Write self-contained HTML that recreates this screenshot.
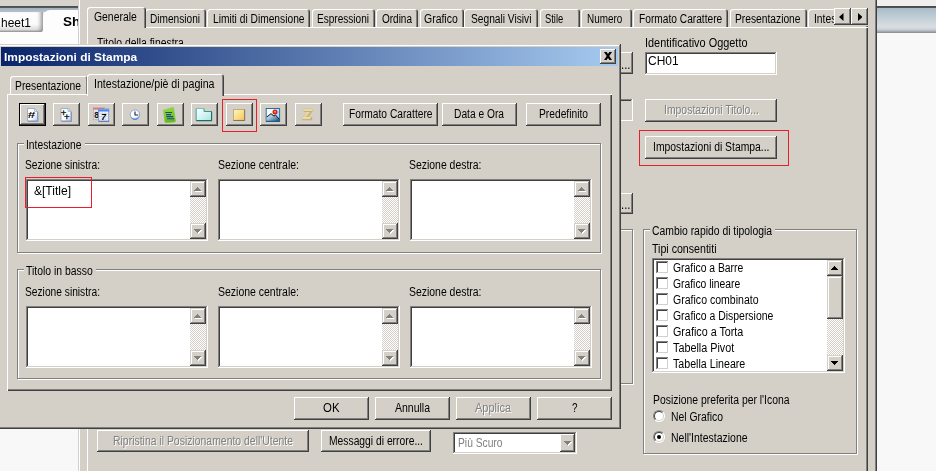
<!DOCTYPE html>
<html lang="it">
<head>
<meta charset="utf-8">
<title>Impostazioni di Stampa</title>
<style>
html,body{margin:0;padding:0;}
body{width:936px;height:471px;overflow:hidden;position:relative;background:#d4d0c8;font-family:"Liberation Sans",sans-serif;font-size:12px;color:#000;}
.a{position:absolute;box-sizing:border-box;}
.t{position:absolute;white-space:nowrap;line-height:14px;height:14px;transform-origin:0 50%;}
.btn{position:absolute;box-sizing:border-box;background:#d4d0c8;box-shadow:inset -1px -1px 0 #404040,inset 1px 1px 0 #fff,inset -2px -2px 0 #808080,inset 2px 2px 0 #d4d0c8;}
.dis{color:#808080;text-shadow:1px 1px 0 #fff;}
.sunk{position:absolute;box-sizing:border-box;background:#fff;box-shadow:inset -1px -1px 0 #fff,inset 1px 1px 0 #808080,inset -2px -2px 0 #d4d0c8,inset 2px 2px 0 #404040;}
.grp{position:absolute;box-sizing:border-box;border:1px solid #808080;box-shadow:1px 1px 0 #fff,inset 1px 1px 0 #fff;}
.sb{position:absolute;width:16px;background-color:#e9e7e3;background-image:conic-gradient(#fff 25%,#d4d0c8 0 50%,#fff 0 75%,#d4d0c8 0);background-size:2px 2px;}
.sbb{position:absolute;left:0;width:16px;height:16px;box-sizing:border-box;background:#d4d0c8;box-shadow:inset -1px -1px 0 #404040,inset 1px 1px 0 #d4d0c8,inset -2px -2px 0 #808080,inset 2px 2px 0 #fff;}
.sbb svg{position:absolute;left:4px;top:6px;}
.sb.d .sbb svg{filter:drop-shadow(1px 1px 0 #fff);}
.cb{position:absolute;width:13px;height:13px;box-sizing:border-box;background:#fff;box-shadow:inset -1px -1px 0 #fff,inset 1px 1px 0 #808080,inset -2px -2px 0 #d4d0c8,inset 2px 2px 0 #404040;}
.rb{position:absolute;width:12px;height:12px;box-sizing:border-box;border-radius:50%;background:#fff;border:1px solid;border-color:#808080 #fff #fff #808080;}
.rb::before{content:"";position:absolute;left:0;top:0;width:10px;height:10px;box-sizing:border-box;border-radius:50%;border:1px solid;border-color:#404040 #d4d0c8 #d4d0c8 #404040;}
.rb i{position:absolute;left:3px;top:3px;width:4px;height:4px;border-radius:50%;background:#000;}
.tab{position:absolute;box-sizing:border-box;background:#d4d0c8;border-radius:3px 3px 0 0;box-shadow:inset 1px 1px 0 #fff,inset -1px 0 0 #404040,inset -2px 0 0 #808080;}
.tab.sel{box-shadow:inset 1px 1px 0 #fff,inset -1px 0 0 #404040,inset -2px 0 0 #808080;}
</style>
</head>
<body>

<!-- ===== background application ===== -->
<div class="a" style="left:0;top:0;width:78px;height:471px;background:#f8f8f8;"></div>
<div class="a" style="left:0;top:0;width:78px;height:6px;background:#d6d3cc;"></div>
<div class="a" style="left:0;top:6px;width:78px;height:6px;background:linear-gradient(#4a4c4e 0,#56585a 1.6px,#9fb1c0 2.1px,#b6c2cc 6px);"></div>
<div class="a" style="left:0;top:12px;width:78px;height:22px;background:#e9e9e9;"></div>
<div class="a" style="left:0;top:12px;width:43px;height:20px;border-radius:0 0 3px 0;background:linear-gradient(#fdfdfd 0,#fbfbfb 60%,#dcdcdc 88%,#909090 100%);box-shadow:inset -5px 0 4px -3px #8c8c8c;"></div>
<div class="t" style="left:1px;top:15.500px;font-size:13px;transform:scaleX(0.92);">heet1</div>
<div class="a" style="left:43px;top:10px;width:35px;height:36px;border-radius:7px 0 0 0;background:#fdfdfd;"></div>
<div class="a" style="left:0;top:32px;width:78px;height:14px;background:#fdfdfd;"></div>
<div class="t" style="left:63px;top:14.500px;font-size:12.500px;font-weight:bold;transform:scaleX(1.08);">Sh</div>

<!-- right side app area -->
<div class="a" style="left:877px;top:0;width:59px;height:471px;background:#f8f8f8;"></div>
<div class="a" style="left:877px;top:0;width:59px;height:6px;background:#f0efed;"></div>
<div class="a" style="left:877px;top:6px;width:59px;height:27px;background:linear-gradient(#47494b 0,#505356 1.7px,#a8bcc8 2.2px,#c4cfd6 12px,#d9dee3 21px,#c9cfd5 23.5px,#98a0a8 26px,#8c9298 26.6px,#f8f8f8 27px);"></div>

<!-- ===== properties dialog (behind) ===== -->
<div class="a" style="left:78px;top:0;width:799px;height:471px;background:#d4d0c8;box-shadow:inset 1px 0 0 #d4d0c8,inset 2px 0 0 #fff,inset -1px 0 0 #404040,inset -2px 0 0 #808080;"></div>
<!-- tab pane of properties dialog -->
<div class="a" style="left:87px;top:27px;width:781px;height:460px;box-shadow:inset 1px 1px 0 #fff,inset -1px 0 0 #404040,inset -2px 0 0 #808080;"></div>
<div class="tab" style="left:145px;top:9px;width:61px;height:18px;"></div>
<div class="t" style="left:150px;top:11.5px;font-size:12px;transform:scaleX(0.8423);">Dimensioni</div>
<div class="tab" style="left:207px;top:9px;width:103px;height:18px;"></div>
<div class="t" style="left:212.5px;top:11.5px;font-size:12px;transform:scaleX(0.8522);">Limiti di Dimensione</div>
<div class="tab" style="left:312px;top:9px;width:63px;height:18px;"></div>
<div class="t" style="left:317px;top:11.5px;font-size:12px;transform:scaleX(0.8383);">Espressioni</div>
<div class="tab" style="left:376px;top:9px;width:42px;height:18px;"></div>
<div class="t" style="left:381.5px;top:11.5px;font-size:12px;transform:scaleX(0.8326);">Ordina</div>
<div class="tab" style="left:420px;top:9px;width:44px;height:18px;"></div>
<div class="t" style="left:424px;top:11.5px;font-size:12px;transform:scaleX(0.8724);">Grafico</div>
<div class="tab" style="left:464px;top:9px;width:74px;height:18px;"></div>
<div class="t" style="left:470.95px;top:11.5px;font-size:12px;transform:scaleX(0.8502);">Segnali Visivi</div>
<div class="tab" style="left:540px;top:9px;width:40px;height:18px;"></div>
<div class="t" style="left:544.7px;top:11.5px;font-size:12px;transform:scaleX(0.7818);">Stile</div>
<div class="tab" style="left:581px;top:9px;width:51px;height:18px;"></div>
<div class="t" style="left:587.25px;top:11.5px;font-size:12px;transform:scaleX(0.8258);">Numero</div>
<div class="tab" style="left:633px;top:9px;width:95px;height:18px;"></div>
<div class="t" style="left:638.75px;top:11.5px;font-size:12px;transform:scaleX(0.8491);">Formato Carattere</div>
<div class="tab" style="left:730px;top:9px;width:77px;height:18px;"></div>
<div class="t" style="left:735.25px;top:11.5px;font-size:12px;transform:scaleX(0.8538);">Presentazione</div>
<div class="tab" style="left:808px;top:9px;width:60px;height:18px;"></div>
<div class="a" style="left:812px;top:10px;width:22px;height:16px;overflow:hidden;"><div class="t" style="left:1.75px;top:1.5px;font-size:12px;transform:scaleX(0.8576);">Intestazione</div></div>
<div class="tab sel" style="left:87px;top:7px;width:59px;height:21px;"></div>
<div class="t" style="left:94.25px;top:9.5px;font-size:12px;transform:scaleX(0.8658);">Generale</div>
<div class="a" style="left:834px;top:6px;width:34px;height:20px;background:#d4d0c8;"></div>
<div class="btn" style="left:834px;top:8px;width:17px;height:17px;"><svg class="a" style="left:5px;top:4.500px" width="4.500" height="8" viewBox="0 0 4.500 8"><path d="M4.500 0v8L0 4z" fill="#000"/></svg></div>
<div class="btn" style="left:851px;top:8px;width:17px;height:17px;"><svg class="a" style="left:6.500px;top:4.500px" width="4.500" height="8" viewBox="0 0 4.500 8"><path d="M0 0v8L4.500 4z" fill="#000"/></svg></div>
<div class="t" style="left:97px;top:35.6px;font-size:12px;transform:scaleX(0.8651);">Titolo della finestra</div>
<div class="t" style="left:644.5px;top:36px;font-size:12px;transform:scaleX(0.9092);">Identificativo Oggetto</div>
<div class="sunk" style="left:645px;top:52px;width:132px;height:23px;"></div>
<div class="t" style="left:648.4px;top:54.4px;font-size:12.3px;transform:scaleX(0.9729);">CH01</div>
<div class="btn" style="left:612px;top:52px;width:21px;height:22px;"></div>
<div class="t" style="left:621px;top:57.5px;font-size:12px;transform:scaleX(0.9485);">...</div>
<div class="sunk" style="left:560px;top:99px;width:73px;height:22px;background:#d4d0c8;"></div>
<div class="btn" style="left:612px;top:193px;width:21px;height:21px;"></div>
<div class="t" style="left:621px;top:197.5px;font-size:12px;transform:scaleX(0.9485);">...</div>
<div class="grp" style="left:500px;top:229px;width:133px;height:155px;"></div>
<div class="btn" style="left:645px;top:99px;width:132px;height:23px;"></div><div class="t dis" style="left:663.5px;top:103px;font-size:12px;transform:scaleX(0.8684);">Impostazioni Titolo...</div>
<div class="btn" style="left:645px;top:136px;width:132px;height:23px;"></div><div class="t" style="left:652.75px;top:140px;font-size:12px;transform:scaleX(0.8647);">Impostazioni di Stampa...</div>
<div class="a" style="left:639px;top:130px;width:150px;height:36px;border:1px solid #ec1c28;"></div>
<div class="grp" style="left:643px;top:229px;width:214px;height:225px;"></div><div class="a" style="left:649.5px;top:228px;width:125px;height:3px;background:#d4d0c8;"></div><div class="t" style="left:651.5px;top:223.5px;font-size:12px;transform:scaleX(0.8649);">Cambio rapido di tipologia</div>
<div class="t" style="left:652.3px;top:242px;font-size:12px;transform:scaleX(0.8845);">Tipi consentiti</div>
<div class="sunk" style="left:652px;top:258px;width:193px;height:115px;"></div>
<div class="cb" style="left:656px;top:261px;"></div>
<div class="t" style="left:672.7px;top:261px;font-size:12px;transform:scaleX(0.8639);">Grafico a Barre</div>
<div class="cb" style="left:656px;top:277px;"></div>
<div class="t" style="left:672.7px;top:277px;font-size:12px;transform:scaleX(0.8623);">Grafico lineare</div>
<div class="cb" style="left:656px;top:293px;"></div>
<div class="t" style="left:672.7px;top:293px;font-size:12px;transform:scaleX(0.8789);">Grafico combinato</div>
<div class="cb" style="left:656px;top:309px;"></div>
<div class="t" style="left:672.7px;top:309px;font-size:12px;transform:scaleX(0.8692);">Grafico a Dispersione</div>
<div class="cb" style="left:656px;top:325px;"></div>
<div class="t" style="left:672.7px;top:325px;font-size:12px;transform:scaleX(0.8957);">Grafico a Torta</div>
<div class="cb" style="left:656px;top:341px;"></div>
<div class="t" style="left:672.7px;top:341px;font-size:12px;transform:scaleX(0.9008);">Tabella Pivot</div>
<div class="cb" style="left:656px;top:357px;"></div>
<div class="t" style="left:672.7px;top:357px;font-size:12px;transform:scaleX(0.8881);">Tabella Lineare</div>
<div class="sb" style="left:827px;top:260px;height:111px;"><div class="sbb" style="top:0;"><svg width="7" height="4" viewBox="0 0 7 4"><path d="M3 0h1v1h1v1h1v1h1v1h-7v-1h1v-1h1v-1h1z" fill="#000"/></svg></div><div class="sbb" style="top:16px;height:43px;"></div><div class="sbb" style="top:95px;"><svg width="7" height="4" viewBox="0 0 7 4"><path d="M0 0h7v1h-1v1h-1v1h-1v1h-1v-1h-1v-1h-1v-1h-1z" fill="#000"/></svg></div></div>
<div class="t" style="left:652.5px;top:392.6px;font-size:12px;transform:scaleX(0.8655);">Posizione preferita per l'Icona</div>
<div class="rb" style="left:653px;top:410px;"></div>
<div class="t" style="left:670.5px;top:409.6px;font-size:12px;transform:scaleX(0.8662);">Nel Grafico</div>
<div class="rb" style="left:653px;top:431px;"><i></i></div>
<div class="t" style="left:670.5px;top:430.6px;font-size:12px;transform:scaleX(0.8736);">Nell'Intestazione</div>
<div class="btn" style="left:97px;top:430px;width:212px;height:22px;"></div><div class="t dis" style="left:113px;top:433.5px;font-size:12px;transform:scaleX(0.8693);">Ripristina il Posizionamento dell'Utente</div>
<div class="btn" style="left:320.5px;top:430px;width:110px;height:22px;"></div><div class="t" style="left:328.5px;top:433.5px;font-size:12px;transform:scaleX(0.8593);">Messaggi di errore...</div>
<div class="sunk" style="left:453px;top:432px;width:124px;height:22px;"></div>
<div class="t" style="left:457.5px;top:436.2px;font-size:12px;transform:scaleX(0.8553);color:#808080;">Più Scuro</div>
<div class="btn" style="left:560px;top:434px;width:15px;height:18px;"><svg class="a" style="left:4px;top:7px;filter:drop-shadow(1px 1px 0 #fff);" width="7" height="4" viewBox="0 0 7 4"><path d="M0 0h7v1h-1v1h-1v1h-1v1h-1v-1h-1v-1h-1v-1h-1z" fill="#808080"/></svg></div>

<!-- ===== front dialog: Impostazioni di Stampa ===== -->
<div class="a" style="left:-2px;top:44px;width:623px;height:385px;background:#d4d0c8;box-shadow:inset -1px -1px 0 #404040,inset 1px 1px 0 #d4d0c8,inset -2px -2px 0 #808080,inset 2px 2px 0 #fff;"></div>
<div class="a" style="left:1px;top:47px;width:617px;height:19px;background:linear-gradient(90deg,#0a246a,#a6caf0);"></div>
<div class="t" style="left:3.500px;top:50.400px;font-size:11.500px;font-weight:bold;color:#fff;transform:scaleX(1.037);">Impostazioni di Stampa</div>
<div class="btn" style="left:600px;top:49px;width:16px;height:15px;">
<svg class="a" style="left:4px;top:3px" width="8" height="8" viewBox="0 0 8 8"><path d="M0 0h2.600l1.400 1.900l1.400-1.900h2.600l-2.700 4l2.700 4h-2.600l-1.400-1.900l-1.400 1.900h-2.600l2.700-4z" fill="#000"/></svg>
</div>
<div class="tab" style="left:10px;top:76px;width:78px;height:19px;"></div>
<div class="t" style="left:15.4px;top:78.8px;font-size:12px;transform:scaleX(0.8603);">Presentazione</div>
<div class="a" style="left:7px;top:94px;width:605px;height:297px;box-shadow:inset 1px 1px 0 #fff,inset -1px -1px 0 #404040,inset -2px -2px 0 #808080;"></div>
<div class="tab sel" style="left:87px;top:74px;width:137px;height:22px;"></div>
<div class="t" style="left:94.4px;top:77px;font-size:12px;transform:scaleX(0.8853);">Intestazione/piè di pagina</div>
<div class="a" style="left:19px;top:103px;width:27px;height:23px;background:#000;"></div>
<div class="btn" style="left:20px;top:104px;width:25px;height:21px;"></div>
<div class="btn" style="left:53px;top:103px;width:27px;height:23px;"></div>
<div class="btn" style="left:88px;top:103px;width:27px;height:23px;"></div>
<div class="btn" style="left:122px;top:103px;width:27px;height:23px;"></div>
<div class="btn" style="left:157px;top:103px;width:27px;height:23px;"></div>
<div class="btn" style="left:191px;top:103px;width:27px;height:23px;"></div>
<div class="btn" style="left:226px;top:103px;width:27px;height:23px;"></div>
<div class="btn" style="left:260px;top:103px;width:27px;height:23px;"></div>
<div class="btn" style="left:295px;top:103px;width:27px;height:23px;"></div>
<!-- toolbar icons -->
<svg class="a" style="left:0;top:100px" width="330" height="30" viewBox="0 100 330 30">
<defs>
<linearGradient id="gp" x1="0" y1="0" x2="1" y2="1"><stop offset="0" stop-color="#ffffff"/><stop offset="0.6" stop-color="#fbfcfe"/><stop offset="1" stop-color="#b4c6e0"/></linearGradient>
<linearGradient id="gy" x1="0" y1="0" x2="1" y2="1"><stop offset="0" stop-color="#fdf3c4"/><stop offset="0.5" stop-color="#fbe08c"/><stop offset="1" stop-color="#f7c24e"/></linearGradient>
<linearGradient id="gg" x1="0" y1="0" x2="0.300" y2="1"><stop offset="0" stop-color="#9be04c"/><stop offset="1" stop-color="#62b81e"/></linearGradient>
<linearGradient id="gf" x1="0" y1="0" x2="1" y2="1"><stop offset="0" stop-color="#ffffff"/><stop offset="0.5" stop-color="#d6f4f4"/><stop offset="1" stop-color="#a4e4e4"/></linearGradient>
<linearGradient id="gs" x1="0" y1="0" x2="1" y2="0.300"><stop offset="0" stop-color="#ffffff"/><stop offset="0.450" stop-color="#f2f6fc"/><stop offset="1" stop-color="#a4d8fa"/></linearGradient>
<linearGradient id="gm" x1="0" y1="0" x2="1" y2="1"><stop offset="0" stop-color="#f4f8fc"/><stop offset="0.450" stop-color="#9cbad0"/><stop offset="1" stop-color="#1c4468"/></linearGradient>
<radialGradient id="gc" cx="0.4" cy="0.35" r="0.7"><stop offset="0" stop-color="#ffffff"/><stop offset="0.6" stop-color="#ffffff"/><stop offset="0.85" stop-color="#b4c8f0"/><stop offset="1" stop-color="#5c88dc"/></radialGradient>
<linearGradient id="gz" x1="0" y1="0" x2="1" y2="1"><stop offset="0" stop-color="#f6e8b8"/><stop offset="1" stop-color="#d8c080"/></linearGradient>
</defs>
<!-- 1: page with # -->
<path d="M27.500 108.500h7l3 3v9.500h-10z" fill="url(#gp)" stroke="#90a8cc" stroke-width="0.900"/>
<path d="M34.500 108.500v3h3z" fill="#e4ecf8" stroke="#90a8cc" stroke-width="0.700"/>
<path d="M28 121.300h10M37.900 112v9.500" stroke="#7890b4" stroke-width="0.900" fill="none"/>
<text transform="translate(27.600,117.500) scale(1.450,0.950)" font-family="Liberation Sans, sans-serif" font-size="9.500" font-weight="bold" font-style="italic" fill="#000">#</text>
<!-- 2: page with ++ -->
<path d="M61 108.500h7l3 3v9.500h-10z" fill="url(#gp)" stroke="#90a8cc" stroke-width="0.900"/>
<path d="M68 108.500v3h3z" fill="#e4ecf8" stroke="#90a8cc" stroke-width="0.700"/>
<path d="M61.500 121.300h10M71.400 112v9.500" stroke="#7890b4" stroke-width="0.900" fill="none"/>
<text x="60.700" y="116.300" font-family="Liberation Sans, sans-serif" font-size="9.500" fill="#000" stroke="#000" stroke-width="0.300">+</text>
<text x="63.900" y="120.300" font-family="Liberation Sans, sans-serif" font-size="9.500" fill="#000" stroke="#000" stroke-width="0.300">+</text>
<!-- 3: calendars -->
<rect x="93.400" y="107.400" width="10.400" height="12" fill="#dfe5f0" stroke="#a9b6cc" stroke-width="0.800"/>
<rect x="93" y="107" width="11.200" height="2.600" fill="#dc7c70"/>
<rect x="93" y="107" width="11.200" height="1" fill="#e8a69c"/>
<text x="94.300" y="118" font-family="Liberation Sans, sans-serif" font-size="8.500" font-weight="bold" fill="#111">8</text>
<rect x="98.700" y="109.200" width="10" height="12" fill="#f2f5fb" stroke="#6a8cc8" stroke-width="0.800"/>
<path d="M99 113.500h9.500M99 116.500h9.500M99 119h9.500M102 111.500v9.500M105.300 111.500v9.500" stroke="#c5d3ea" stroke-width="0.700"/>
<rect x="98.300" y="108.800" width="10.800" height="2.700" fill="#4c84ea"/>
<rect x="98.300" y="108.800" width="10.800" height="1" fill="#7aa6f2"/>
<path d="M98.700 121.300h10.400" stroke="#4a6aa4" stroke-width="0.800"/>
<text x="101.200" y="120" font-family="Liberation Sans, sans-serif" font-size="8.500" font-weight="bold" font-style="italic" fill="#000">7</text>
<!-- 4: clock -->
<circle cx="135" cy="114.600" r="4.700" fill="url(#gc)" stroke="#86a4e0" stroke-width="0.900"/>
<path d="M131.500 118a5 5 0 0 0 7 0" stroke="#4c7cd8" stroke-width="1" fill="none"/>
<path d="M135 111.600v3.400h3" stroke="#1c2434" stroke-width="1.100" fill="none"/>
<!-- 5: green doc -->
<path d="M163.400 110.200l9.300-2.800l0.800 0.300l2 13.200l-0.600 1l-9 0.800l-1-0.800z" fill="url(#gg)" stroke="#7ccc34" stroke-width="0.600"/>
<path d="M165.300 112.500h6.700M166 114.600h5M166.300 116.600h6.700M167 118.700h7" stroke="#1c4a84" stroke-width="1.050"/>
<!-- 6: folder -->
<path d="M196.200 108.500h7.800v3h7.500v9h-15.300z" fill="url(#gf)" stroke="#3a9892" stroke-width="1"/>
<path d="M196.200 120.600h15.400v-9" stroke="#1c6c68" stroke-width="1.100" fill="none"/>
<path d="M196.200 120.500v-12h7.800" stroke="#7cc6c2" stroke-width="0.900" fill="none"/>
<!-- 7: yellow square -->
<rect x="233.600" y="109.400" width="10.900" height="10.900" fill="url(#gy)" stroke="#b8a070" stroke-width="0.800"/>
<path d="M233.400 120.500h11.300v-11" stroke="#6c6a60" stroke-width="0.800" fill="none"/>
<!-- 8: picture -->
<rect x="266.200" y="108.500" width="13.400" height="13" fill="url(#gs)" stroke="#2c6ca4" stroke-width="1"/>
<path d="M266.700 117l4.300-3.300l3 2.400l1.500-1.100l3.700 4.200v2h-12.500z" fill="url(#gm)"/>
<path d="M266.700 117l4.300-3.300l3 2.400l1.500-1.100l3.900 4.400" stroke="#0c1420" stroke-width="1" fill="none"/>
<path d="M266 121.400h14" stroke="#1c5c94" stroke-width="1.200"/>
<circle cx="275" cy="112" r="2.500" fill="#dc1c1c"/>
<circle cx="275" cy="111.700" r="1" fill="#f89c3c"/>
<!-- 9: scroll (disabled) -->
<path d="M307.300 110.500h5.500l-5 7.600h-5.400z" fill="url(#gz)" stroke="#cdb880" stroke-width="0.400"/>
<path d="M310.600 110.700h2.200l-5 7.400h-2z" fill="#bfa96f" opacity="0.700"/>
<rect x="303.200" y="109" width="10" height="2.500" rx="1.250" fill="#efe0b0" stroke="#cbb67e" stroke-width="0.500"/>
<path d="M304 111.400h8.600" stroke="#b8a268" stroke-width="0.700"/>
<rect x="301.900" y="117.200" width="10.200" height="2.500" rx="1.250" fill="#e9d8a4" stroke="#c4ae76" stroke-width="0.500"/>
<path d="M302.600 117.500h8" stroke="#f8f0d0" stroke-width="0.600"/>
<circle cx="311.200" cy="118.400" r="0.900" fill="#bfa96f"/><path d="M302.500 119.700h9" stroke="#b8a268" stroke-width="0.600"/>
</svg>

<div class="a" style="left:222px;top:99px;width:35px;height:33px;border:1px solid #ec1c28;"></div>
<div class="btn" style="left:343px;top:103px;width:94.5px;height:23px;"></div><div class="t" style="left:348.5px;top:107px;font-size:12px;transform:scaleX(0.8516);">Formato Carattere</div>
<div class="btn" style="left:441.5px;top:103px;width:75.5px;height:23px;"></div><div class="t" style="left:454.25px;top:107px;font-size:12px;transform:scaleX(0.8517);">Data e Ora</div>
<div class="btn" style="left:526px;top:103px;width:75px;height:23px;"></div><div class="t" style="left:539px;top:107px;font-size:12px;transform:scaleX(0.8540);">Predefinito</div>
<div class="grp" style="left:17px;top:143px;width:584px;height:110px;"></div><div class="a" style="left:24.25px;top:142px;width:60.5px;height:3px;background:#d4d0c8;"></div><div class="t" style="left:26.25px;top:137.5px;font-size:12px;transform:scaleX(0.8576);">Intestazione</div>
<div class="t" style="left:25.45px;top:157.5px;font-size:12px;transform:scaleX(0.8518);">Sezione sinistra:</div>
<div class="t" style="left:217.7px;top:157.5px;font-size:12px;transform:scaleX(0.8735);">Sezione centrale:</div>
<div class="t" style="left:409.45px;top:157.5px;font-size:12px;transform:scaleX(0.8694);">Sezione destra:</div>
<div class="sunk" style="left:26px;top:179px;width:182px;height:62px;"></div><div class="sb d" style="left:190px;top:181px;height:58px;"><div class="sbb" style="top:0;"><svg width="7" height="4" viewBox="0 0 7 4"><path d="M3 0h1v1h1v1h1v1h1v1h-7v-1h1v-1h1v-1h1z" fill="#808080"/></svg></div><div class="sbb" style="top:42px;"><svg width="7" height="4" viewBox="0 0 7 4"><path d="M0 0h7v1h-1v1h-1v1h-1v1h-1v-1h-1v-1h-1v-1h-1z" fill="#808080"/></svg></div></div>
<div class="sunk" style="left:218px;top:179px;width:182px;height:62px;"></div><div class="sb d" style="left:382px;top:181px;height:58px;"><div class="sbb" style="top:0;"><svg width="7" height="4" viewBox="0 0 7 4"><path d="M3 0h1v1h1v1h1v1h1v1h-7v-1h1v-1h1v-1h1z" fill="#808080"/></svg></div><div class="sbb" style="top:42px;"><svg width="7" height="4" viewBox="0 0 7 4"><path d="M0 0h7v1h-1v1h-1v1h-1v1h-1v-1h-1v-1h-1v-1h-1z" fill="#808080"/></svg></div></div>
<div class="sunk" style="left:410px;top:179px;width:182px;height:62px;"></div><div class="sb d" style="left:574px;top:181px;height:58px;"><div class="sbb" style="top:0;"><svg width="7" height="4" viewBox="0 0 7 4"><path d="M3 0h1v1h1v1h1v1h1v1h-7v-1h1v-1h1v-1h1z" fill="#808080"/></svg></div><div class="sbb" style="top:42px;"><svg width="7" height="4" viewBox="0 0 7 4"><path d="M0 0h7v1h-1v1h-1v1h-1v1h-1v-1h-1v-1h-1v-1h-1z" fill="#808080"/></svg></div></div>
<div class="t" style="left:33.75px;top:183.5px;font-size:12px;transform:scaleX(1.0025);">&amp;[Title]</div>
<div class="a" style="left:25px;top:177px;width:67px;height:31px;border:1px solid #ec1c28;"></div>
<div class="grp" style="left:17px;top:269px;width:584px;height:110px;"></div><div class="a" style="left:24.25px;top:268px;width:71.75px;height:3px;background:#d4d0c8;"></div><div class="t" style="left:26.25px;top:263.5px;font-size:12px;transform:scaleX(0.8676);">Titolo in basso</div>
<div class="t" style="left:25.45px;top:284.75px;font-size:12px;transform:scaleX(0.8518);">Sezione sinistra:</div>
<div class="t" style="left:217.7px;top:284.75px;font-size:12px;transform:scaleX(0.8735);">Sezione centrale:</div>
<div class="t" style="left:409.45px;top:284.75px;font-size:12px;transform:scaleX(0.8694);">Sezione destra:</div>
<div class="sunk" style="left:26px;top:306px;width:182px;height:62px;"></div><div class="sb d" style="left:190px;top:308px;height:58px;"><div class="sbb" style="top:0;"><svg width="7" height="4" viewBox="0 0 7 4"><path d="M3 0h1v1h1v1h1v1h1v1h-7v-1h1v-1h1v-1h1z" fill="#808080"/></svg></div><div class="sbb" style="top:42px;"><svg width="7" height="4" viewBox="0 0 7 4"><path d="M0 0h7v1h-1v1h-1v1h-1v1h-1v-1h-1v-1h-1v-1h-1z" fill="#808080"/></svg></div></div>
<div class="sunk" style="left:218px;top:306px;width:182px;height:62px;"></div><div class="sb d" style="left:382px;top:308px;height:58px;"><div class="sbb" style="top:0;"><svg width="7" height="4" viewBox="0 0 7 4"><path d="M3 0h1v1h1v1h1v1h1v1h-7v-1h1v-1h1v-1h1z" fill="#808080"/></svg></div><div class="sbb" style="top:42px;"><svg width="7" height="4" viewBox="0 0 7 4"><path d="M0 0h7v1h-1v1h-1v1h-1v1h-1v-1h-1v-1h-1v-1h-1z" fill="#808080"/></svg></div></div>
<div class="sunk" style="left:410px;top:306px;width:182px;height:62px;"></div><div class="sb d" style="left:574px;top:308px;height:58px;"><div class="sbb" style="top:0;"><svg width="7" height="4" viewBox="0 0 7 4"><path d="M3 0h1v1h1v1h1v1h1v1h-7v-1h1v-1h1v-1h1z" fill="#808080"/></svg></div><div class="sbb" style="top:42px;"><svg width="7" height="4" viewBox="0 0 7 4"><path d="M0 0h7v1h-1v1h-1v1h-1v1h-1v-1h-1v-1h-1v-1h-1z" fill="#808080"/></svg></div></div>
<div class="btn" style="left:294px;top:397px;width:75px;height:22.5px;"></div><div class="t" style="left:323.25px;top:400.75px;font-size:12px;transform:scaleX(0.9514);">OK</div>
<div class="btn" style="left:374.5px;top:397px;width:75px;height:22.5px;"></div><div class="t" style="left:394.5px;top:400.75px;font-size:12px;transform:scaleX(0.8743);">Annulla</div>
<div class="btn" style="left:455.75px;top:397px;width:75px;height:22.5px;"></div><div class="t dis" style="left:475.25px;top:400.75px;font-size:12px;transform:scaleX(0.9146);">Applica</div>
<div class="btn" style="left:536.75px;top:397px;width:75px;height:22.5px;"></div><div class="t" style="left:571.5px;top:400.75px;font-size:12px;transform:scaleX(0.8224);">?</div>

</body>
</html>
